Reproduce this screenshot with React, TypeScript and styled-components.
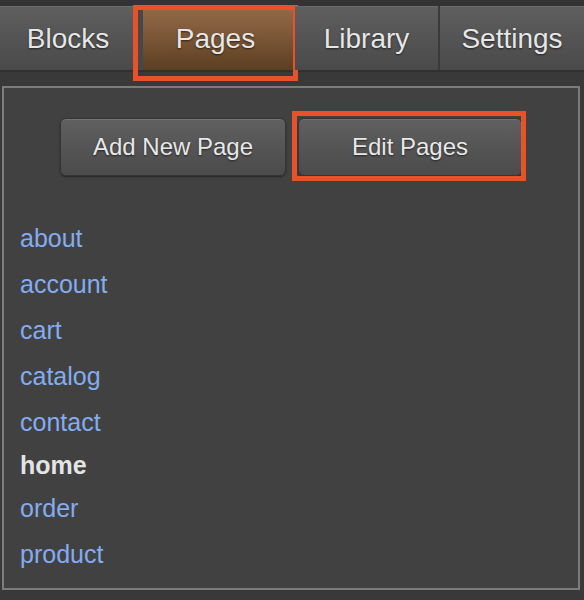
import React from 'react'
import styled, { createGlobalStyle } from 'styled-components'

const GlobalStyle = createGlobalStyle`
  html, body {
    margin: 0;
    padding: 0;
    background: #393939;
  }
  body {
    font-family: "Liberation Sans", Arial, Helvetica, sans-serif;
  }
`

const tabs = [
  { label: 'Blocks', width: 136 },
  { label: 'Pages', width: 155, active: true },
  { label: 'Library', width: 143 },
  { label: 'Settings', width: 144 },
]

const pages = ['about', 'account', 'cart', 'catalog', 'contact', 'home', 'order', 'product']
const currentPage = 'home'

const Shell = styled.div`
  width: 584px;
  height: 600px;
  display: flex;
  flex-direction: column;
  background: #393939;
  overflow: hidden;
`

const TabStrip = styled.div`
  padding-top: 6px;
  background: #333;
  border-bottom: 2px solid #303030;
`

const TabBar = styled.div`
  display: flex;
  gap: 2px;
  height: 64px;
  background: #3a3a3a;
`

const Tab = styled.div<{ $width: number; $active?: boolean }>`
  position: relative;
  flex: none;
  width: ${(p) => p.$width}px;
  box-sizing: border-box;
  padding-top: 2px;
  display: flex;
  align-items: center;
  justify-content: center;
  font-size: 28px;
  color: #e6e6e6;
  text-shadow: 0 1px 2px rgba(0, 0, 0, 0.6);
  background: ${(p) =>
    p.$active
      ? 'linear-gradient(to bottom, #946b4a 0%, #7a5636 50%, #5c3e22 100%)'
      : 'linear-gradient(to bottom, #5f5f5f 0%, #545454 50%, #4a4a4a 100%)'};
  box-shadow: ${(p) =>
    p.$active
      ? 'inset 5px 3px 0 #474747'
      : 'inset 0 1px 0 #6c6c6c'};
`

const Highlight = styled.div<{ $t: number; $r: number; $b: number; $l: number }>`
  position: absolute;
  top: ${(p) => -p.$t}px;
  right: ${(p) => -p.$r}px;
  bottom: ${(p) => -p.$b}px;
  left: ${(p) => -p.$l}px;
  border: 5px solid #e8522b;
  pointer-events: none;
`

const Panel = styled.div`
  margin: 14px 4px 10px 2px;
  flex: 1;
  border: 2px solid #7c7c7c;
  background: #414141;
  display: flex;
  flex-direction: column;
`

const ButtonRow = styled.div`
  display: flex;
  justify-content: center;
  gap: 12px;
  padding-top: 30px;
`

const ActionButton = styled.div<{ $width: number }>`
  position: relative;
  width: ${(p) => p.$width}px;
  height: 58px;
  box-sizing: border-box;
  display: flex;
  align-items: center;
  justify-content: center;
  font-size: 24px;
  color: #e8e8e8;
  text-shadow: 0 1px 2px rgba(0, 0, 0, 0.6);
  border: 1px solid #353535;
  border-radius: 6px;
  background: linear-gradient(to bottom, #606060 0%, #555 50%, #4b4b4b 100%);
  box-shadow: inset 0 1px 0 rgba(255, 255, 255, 0.12), 0 1px 2px rgba(0, 0, 0, 0.45);
`

const PageList = styled.div`
  display: flex;
  flex-direction: column;
  margin-top: 39px;
  padding-left: 16px;
`

const PageLink = styled.a<{ $current?: boolean }>`
  display: block;
  font-size: 25px;
  line-height: ${(p) => (p.$current ? 40 : 46)}px;
  color: ${(p) => (p.$current ? '#e4e4e4' : '#84acf0')};
  font-weight: ${(p) => (p.$current ? 700 : 400)};
  text-decoration: none;
`

export default function App() {
  return (
    <Shell>
      <GlobalStyle />
      <TabStrip>
        <TabBar>
          {tabs.map((t) => (
            <Tab key={t.label} $width={t.width} $active={t.active}>
              {t.label}
              {t.active && <Highlight $t={1} $r={5} $b={11} $l={5} />}
            </Tab>
          ))}
        </TabBar>
      </TabStrip>
      <Panel>
        <ButtonRow>
          <ActionButton $width={226}>Add New Page</ActionButton>
          <ActionButton $width={224}>
            Edit Pages
            <Highlight $t={8} $r={5} $b={6} $l={7} />
          </ActionButton>
        </ButtonRow>
        <PageList>
          {pages.map((p) => (
            <PageLink key={p} $current={p === currentPage}>
              {p}
            </PageLink>
          ))}
        </PageList>
      </Panel>
    </Shell>
  )
}
